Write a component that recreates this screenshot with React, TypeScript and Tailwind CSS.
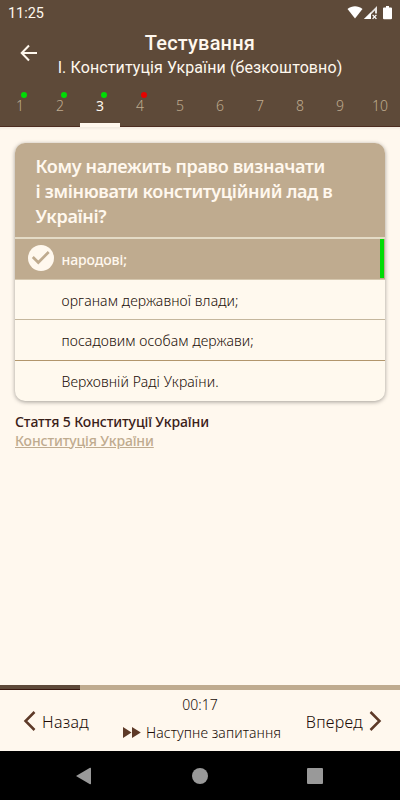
import type { ReactNode } from "react";

const tabs = [
  { n: 1, dot: "bg-[#00dc05]" },
  { n: 2, dot: "bg-[#00dc05]" },
  { n: 3, dot: "bg-[#00dc05]", active: true },
  { n: 4, dot: "bg-[#e60000]" },
  { n: 5 },
  { n: 6 },
  { n: 7 },
  { n: 8 },
  { n: 9 },
  { n: 10 },
];

function StatusBar() {
  return (
    <div className="flex h-[25px] items-center justify-between pr-[7px] pl-[8px] text-[#fff8ee]">
      <span className="pt-px font-[Roboto,sans-serif] text-[14.4px] leading-[25px]">11:25</span>
      <svg width="46" height="16" viewBox="0 0 46 16" className="mt-[2px]" fill="#fff">
        <path d="M0.5 3C5-0.6 11-0.6 15.5 3L8 12.6Z" />
        <path d="M17 13L30 0V7.5H28V4.6L19.5 13Z" opacity=".85" />
        <path d="M17 13L24 6.2V13Z" />
        <path d="M25.6 8.9L29.4 12.9M29.4 8.9L25.6 12.9" stroke="#fff" strokeWidth="1.3" />
        <path d="M39 0H42V1.4H44Q45 1.4 45 2.4V12.2Q45 13.2 44 13.2H37Q36 13.2 36 12.2V2.4Q36 1.4 37 1.4H39Z" />
      </svg>
    </div>
  );
}

function Header() {
  return (
    <header className="h-[127px] border-b border-[#4c2d20] bg-[#5e4a39] font-[Roboto,sans-serif]">
      <StatusBar />
      <div className="grid h-[65px] grid-cols-[57px_286px_57px] text-[#fff8ee]">
        <svg width="18" height="18" viewBox="0 0 18 18" className="mt-[19px] ml-[20px]" fill="none" stroke="#fff8ee" strokeWidth="2">
          <path d="M17 9H2M9 1.5L1.7 9L9 16.5" />
        </svg>
        <div className="pt-[6px] text-center whitespace-nowrap">
          <h1 className="text-[20px] leading-[24px] font-medium tracking-[0.2px]">Тестування</h1>
          <p className="mt-px text-[16px] leading-[23px] tracking-[0.11px]">І. Конституція України (безкоштовно)</p>
        </div>
      </div>
      <nav className="grid h-[37px] grid-cols-10 font-['Noto_Sans',sans-serif] text-[14px] font-light">
        {tabs.map((t) => (
          <div key={t.n} className={`relative h-[37px] text-center leading-[31px] ${t.active ? "border-b-4 border-[#fff8ee] font-normal text-[#fff8ee]" : "text-[#bfab8f]"}`}>
            {t.dot && <span className={`absolute top-[1.5px] left-[21px] size-[6px] rounded-full ${t.dot}`} />}
            {t.n}
          </div>
        ))}
      </nav>
    </header>
  );
}

function Answer({ children, line }: { children: ReactNode; line: string }) {
  return <div className={`pl-[46.5px] text-[14px] font-light tracking-[0.1px] text-[#200c06] ${line}`}>{children}</div>;
}

export default function App() {
  return (
    <div className="flex h-[800px] w-[400px] flex-col overflow-hidden bg-[#fff8ee] font-['Noto_Sans',sans-serif] text-[#3a2018]">
      <Header />
      <main className="h-[558px] px-[15px] pt-[16px] shadow-[inset_0_3px_2px_-1px_#0000000c]">
        <section className="h-[258px] overflow-hidden rounded-[10px] bg-[#fff9ee] shadow-[0_1px_4px_#00000060]">
          <h2 className="h-[94px] bg-[#bfab8f] pt-[11px] pl-[20.5px] text-[18px] leading-[25px] font-semibold tracking-[-0.36px] whitespace-nowrap text-[#fff8ee]">
            Кому належить право визначати
            <br />і змінювати конституційний лад в
            <br />
            Україні?
          </h2>
          <div className="flex h-[43px] items-center border-t-2 border-b border-t-[#e4dbc6] border-b-[#d5c7ae] bg-[#bfab8f] pl-[13px] text-[14px] font-medium text-[#fff8ee]">
            <svg width="26" height="26" viewBox="0 0 26 26" className="-mt-[2px]">
              <circle cx="13" cy="13" r="13" fill="#fff8ee" />
              <path d="M4.8 12L10.3 17.5L20.7 7" fill="none" stroke="#bfab8f" strokeWidth="2.7" />
            </svg>
            <span className="ml-[7.5px] tracking-[-0.1px]">народові;</span>
            <span className="mr-px ml-auto h-[39px] w-[4px] self-start bg-[#00dc05]" />
          </div>
          <Answer line="h-[40px] leading-[41px] border-b border-[#c5b79d]">органам державної влади;</Answer>
          <Answer line="h-[41px] leading-[42px] border-b border-[#b2966c]">посадовим особам держави;</Answer>
          <Answer line="h-[40px] leading-[41px]">Верховній Раді України.</Answer>
        </section>
        <p className="mt-[11px] text-[14px] leading-[19px] font-medium tracking-[-0.12px]">Стаття 5 Конституції України</p>
        <a className="block text-[14px] leading-[19px] font-medium tracking-[-0.14px] text-[#bfab8f] underline">Конституція України</a>
      </main>
      <div className="flex h-[5px] bg-[#bfab8f]">
        <div className="w-[80px] border-b border-[#39180f] bg-[#5e4a39]" />
      </div>
      <footer className="grid h-[61px] grid-cols-[70px_1fr_78px] pr-[18px] pl-[23px] font-light whitespace-nowrap text-[#200c06]">
        <button className="flex items-center gap-[6px] text-[16px] tracking-[0.3px]">
          <svg width="13" height="20" viewBox="0 0 13 20" className="shrink-0" fill="none" stroke="#5e3a28" strokeWidth="2.5">
            <path d="M11.5 1L2.5 10L11.5 19" />
          </svg>
          <span className="mt-[2px]">Назад</span>
        </button>
        <div className="pl-[30px] text-[14px]">
          <div className="mt-[5px] w-[154px] text-center leading-[20px]">00:17</div>
          <button className="mt-[8px] flex items-center gap-[5px] leading-[20px] tracking-[0.08px]">
            <svg width="18" height="11" viewBox="0 0 18 11" className="-mt-[2px] shrink-0" fill="#5e3a28">
              <path d="M0 0L8.5 5.5L0 11ZM9 0L17.8 5.5L9 11Z" />
            </svg>
            Наступне запитання
          </button>
        </div>
        <button className="flex items-center justify-end gap-[6px] text-[16px] tracking-[0.3px]">
          <span className="mt-[2px]">Вперед</span>
          <svg width="13" height="20" viewBox="0 0 13 20" className="shrink-0" fill="none" stroke="#5e3a28" strokeWidth="2.5">
            <path d="M1.5 1L10.5 10L1.5 19" />
          </svg>
        </button>
      </footer>
      <div className="grid h-[49px] grid-cols-[76px_116px_115px_93px] items-center bg-black">
        <span />
        <svg width="16" height="18" viewBox="0 0 16 18" fill="#999">
          <path d="M0 9L14 .8Q15 .4 15 1.5V16.5Q15 17.6 14 17.2Z" />
        </svg>
        <span className="size-[16px] rounded-full bg-[#999]" />
        <span className="size-[16px] rounded-[1px] bg-[#999]" />
      </div>
    </div>
  );
}
